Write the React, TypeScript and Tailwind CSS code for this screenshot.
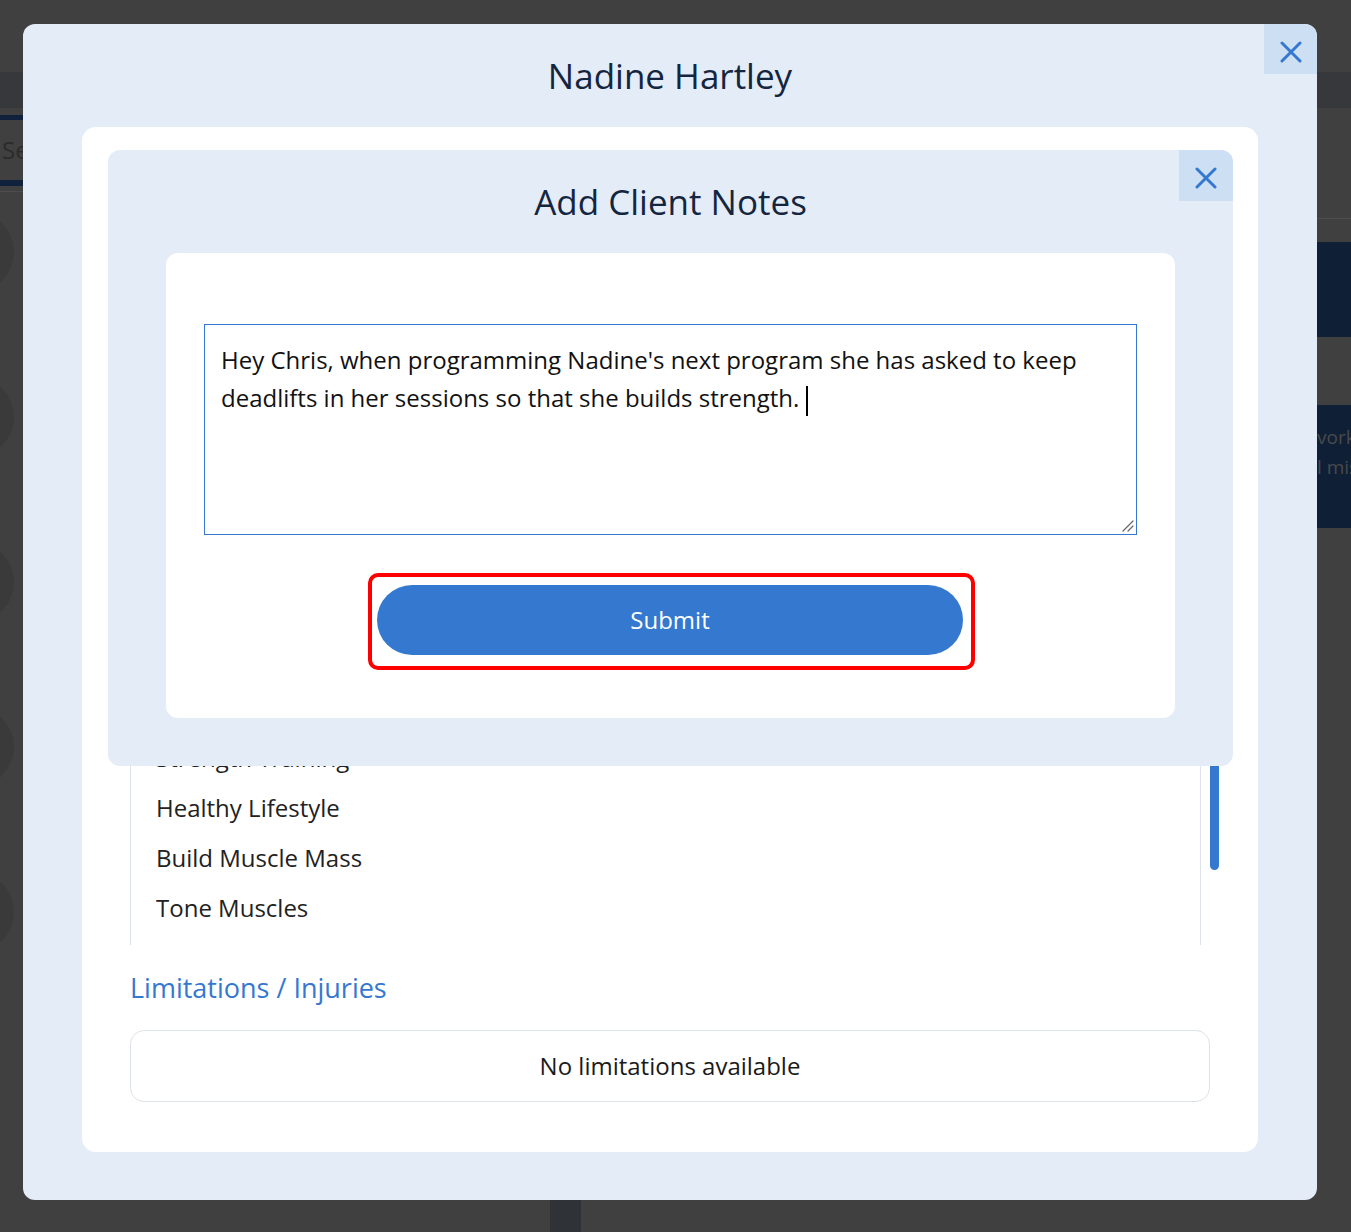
import React from "react";

const CloseX = () => (
  <svg width="22" height="22" viewBox="0 0 22 22" fill="none" stroke="#3578d0" strokeWidth="3" strokeLinecap="round">
    <path d="M2 2 L20 20 M20 2 L2 20" />
  </svg>
);

const Backdrop = () => (
  <div className="flex flex-col">
    <div className="h-[72px]" />
    <div className="h-[36px] bg-[#36383b]" />
    <div className="flex justify-between">
      <div className="w-[24px] flex flex-col overflow-hidden">
        <div className="mt-[7px] h-[5px] bg-[#0f213d]" />
        <div className="h-[60px] flex items-center text-[24px] text-[#2b2b2b] pl-[2px] whitespace-nowrap">Se</div>
        <div className="h-[6px] bg-[#0f213d]" />
        <div className="mt-[5px] h-px bg-[#4d4d4d]" />
        <div className="flex flex-col gap-[85px] mt-[20px] -ml-[66px]">
          <div className="w-[80px] h-[80px] rounded-full bg-[#3a3a3a]" />
          <div className="w-[80px] h-[80px] rounded-full bg-[#3a3a3a]" />
          <div className="w-[80px] h-[80px] rounded-full bg-[#3a3a3a]" />
          <div className="w-[80px] h-[80px] rounded-full bg-[#3a3a3a]" />
          <div className="w-[80px] h-[80px] rounded-full bg-[#3a3a3a]" />
        </div>
      </div>
      <div className="w-[34px] flex flex-col overflow-hidden">
        <div className="mt-[110px] h-px bg-[#4d4d4d]" />
        <div className="mt-[23px] h-[95px] bg-[#0e1f36]" />
        <div className="mt-[68px] h-[123px] bg-[#0e1f36] flex flex-col pt-[17px] text-[19px] leading-[30px] text-[#4a4a4a] whitespace-nowrap">
          <span>vork</span>
          <span>l mis</span>
        </div>
      </div>
    </div>
  </div>
);

export default function App() {
  return (
    <div className="relative w-[1351px] h-[1232px] bg-[#404040] overflow-hidden font-['Open_Sans',sans-serif]">
      <Backdrop />
      <div className="absolute left-[550px] top-[1200px] w-[31px] h-[32px] bg-[#2f3236] border-l-2 border-[#333]" />

      {/* Outer modal */}
      <div className="absolute left-[23px] top-[24px] w-[1294px] h-[1176px] rounded-[12px] bg-[#e4ecf8] flex flex-col">
        <button className="absolute right-0 top-0 w-[53px] h-[50px] bg-[#cddff3] rounded-tr-[12px] flex items-center justify-center pt-[6px]">
          <CloseX />
        </button>
        <div className="h-[103px] flex items-center justify-center">
          <h1 className="text-[35px] leading-none text-[#14263f]">Nadine Hartley</h1>
        </div>

        <div className="relative mx-[59px] mb-[48px] flex-1 bg-white rounded-[14px] px-[48px] pt-[24px] flex flex-col">
          <h2 className="text-[27px] leading-[36px] text-[#3578d0]">Goals</h2>
          <div className="mt-[16px] h-[742px] flex -mr-[9px]">
            <div className="flex-1 border-x border-[#dde3e8] flex flex-col justify-end pb-[12px] pl-[25px] text-[24px] leading-[50px] text-[#222]">
              <div>Lose Weight</div>
              <div>Strength Training</div>
              <div>Healthy Lifestyle</div>
              <div>Build Muscle Mass</div>
              <div>Tone Muscles</div>
            </div>
            <div className="ml-[9px] w-[9px] flex flex-col justify-end pb-[75px]">
              <div className="h-[220px] rounded-full bg-[#3578d0]" />
            </div>
          </div>
          <h2 className="mt-[25px] text-[27px] leading-[36px] text-[#3578d0]">Limitations / Injuries</h2>
          <div className="mt-[24px] h-[72px] border border-[#dde3e8] rounded-[14px] flex items-center justify-center text-[24px] text-[#1a1a1a]">
            No limitations available
          </div>

          {/* Inner modal */}
          <div className="absolute left-[26px] top-[23px] w-[1125px] h-[616px] rounded-[12px] bg-[#e4ecf8] flex flex-col">
            <button className="absolute right-0 top-0 w-[54px] h-[51px] bg-[#cddff3] rounded-tr-[12px] flex items-center justify-center pt-[4px]">
              <CloseX />
            </button>
            <div className="h-[103px] flex items-center justify-center">
              <h2 className="text-[35px] leading-none text-[#14263f]">Add Client Notes</h2>
            </div>
            <div className="mx-[58px] mb-[48px] flex-1 bg-white rounded-[12px] flex flex-col pt-[71px]">
              <div className="relative ml-[38px] w-[933px] h-[211px] border border-[#3578d0] pt-[16px] px-[16px] text-[24px] leading-[38px] text-[#111]">
                Hey Chris, when programming Nadine's next program she has asked to keep deadlifts in her sessions so that she builds strength.{" "}
                <span className="inline-block w-[2px] h-[30px] bg-black align-middle" />
                <svg className="absolute right-[2px] bottom-[2px]" width="12" height="12" viewBox="0 0 12 12" stroke="#666" strokeWidth="1.2" strokeLinecap="round">
                  <path d="M11 1 L1 11 M11 6 L6 11" />
                </svg>
              </div>
              <div className="mt-[38px] ml-[202px] w-[607px] h-[97px] border-4 border-[#ff0000] rounded-[10px] pt-[8px] pl-[5px]">
                <button className="w-[586px] h-[70px] rounded-full bg-[#3578d0] text-white text-[24px] flex items-center justify-center">
                  Submit
                </button>
              </div>
            </div>
          </div>
        </div>
      </div>
    </div>
  );
}
